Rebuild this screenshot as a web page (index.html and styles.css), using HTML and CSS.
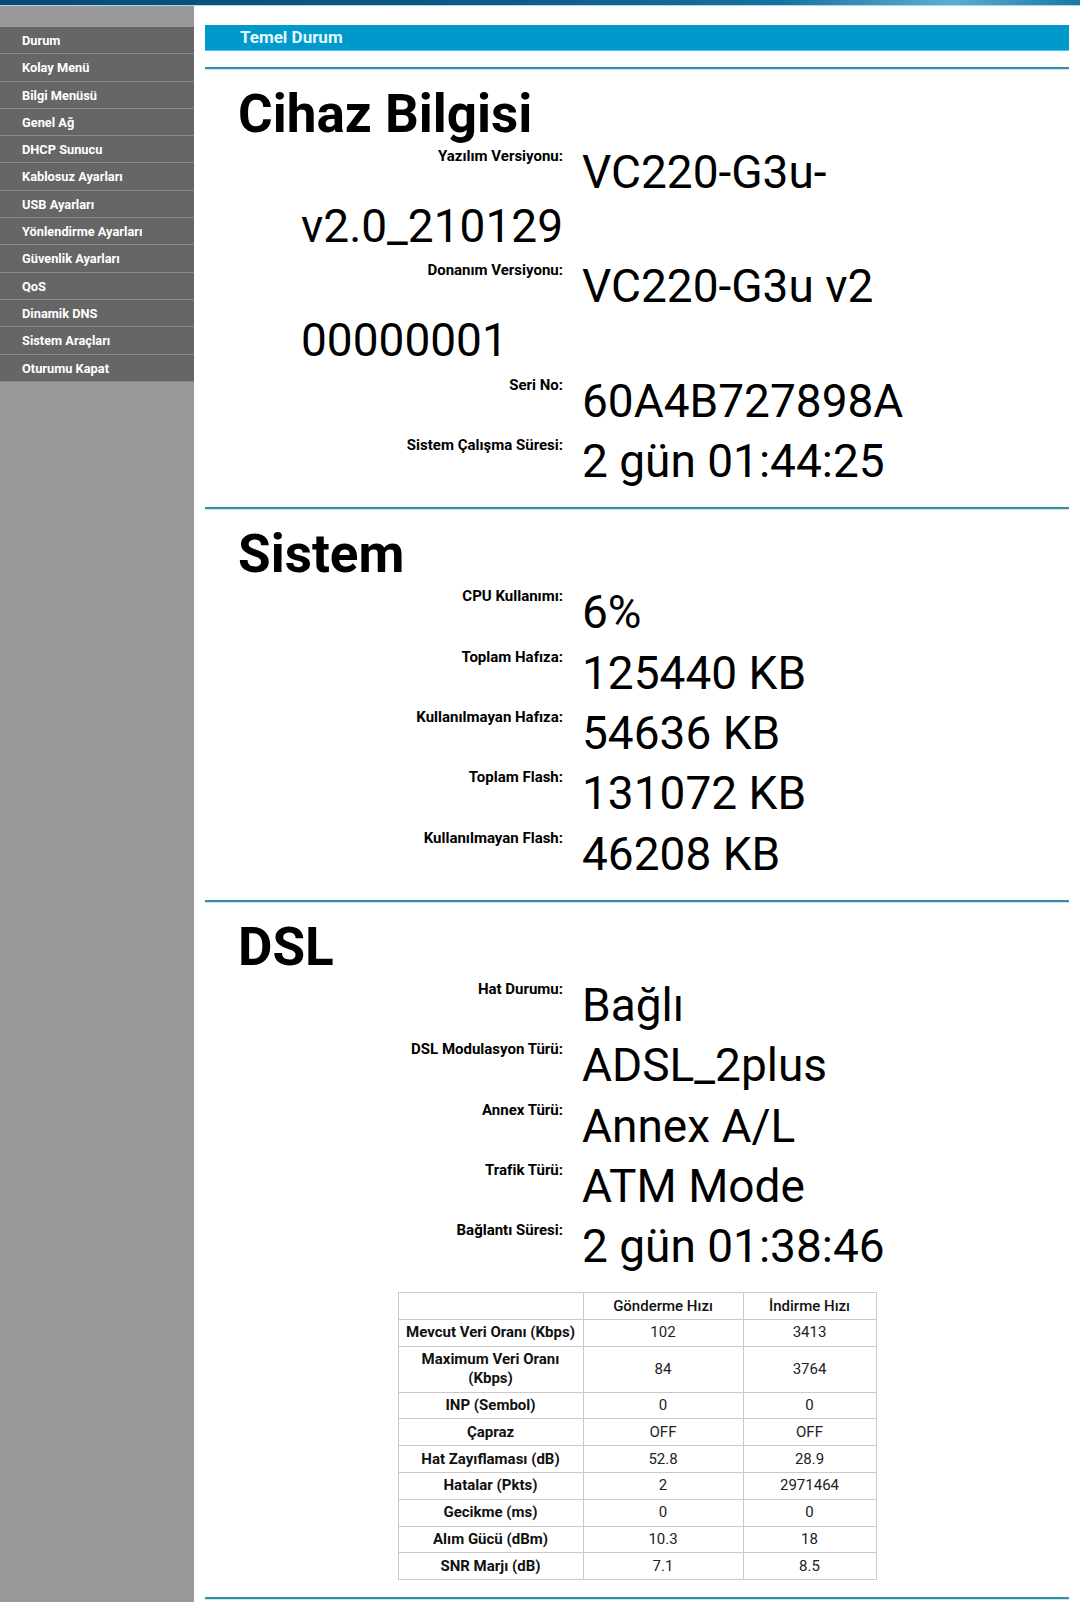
FILE: index.html
```html
<!DOCTYPE html>
<html lang="tr">
<head>
<meta charset="utf-8">
<title>Temel Durum</title>
<link rel="stylesheet" href="styles.css">
</head>
<body>
<div class="topbar"></div>
<div class="layout">
  <nav class="sidebar">
    <ul class="menu">
      <li>Durum</li>
      <li>Kolay Menü</li>
      <li>Bilgi Menüsü</li>
      <li>Genel Ağ</li>
      <li>DHCP Sunucu</li>
      <li>Kablosuz Ayarları</li>
      <li>USB Ayarları</li>
      <li>Yönlendirme Ayarları</li>
      <li>Güvenlik Ayarları</li>
      <li>QoS</li>
      <li>Dinamik DNS</li>
      <li>Sistem Araçları</li>
      <li>Oturumu Kapat</li>
    </ul>
  </nav>
  <main class="main">
    <div class="title-bar">Temel Durum</div>
    <hr class="rule first">

    <section class="block">
      <h2 class="block-title">Cihaz Bilgisi</h2>
      <div class="row"><span class="label">Yazılım Versiyonu:</span><span class="value">VC220-G3u-v2.0_210129</span></div>
      <div class="row"><span class="label">Donanım Versiyonu:</span><span class="value">VC220-G3u v2 00000001</span></div>
      <div class="row"><span class="label">Seri No:</span><span class="value">60A4B727898A</span></div>
      <div class="row"><span class="label">Sistem Çalışma Süresi:</span><span class="value">2 gün 01:44:25</span></div>
    </section>
    <hr class="rule">

    <section class="block">
      <h2 class="block-title">Sistem</h2>
      <div class="row"><span class="label">CPU Kullanımı:</span><span class="value">6%</span></div>
      <div class="row"><span class="label">Toplam Hafıza:</span><span class="value">125440 KB</span></div>
      <div class="row"><span class="label">Kullanılmayan Hafıza:</span><span class="value">54636 KB</span></div>
      <div class="row"><span class="label">Toplam Flash:</span><span class="value">131072 KB</span></div>
      <div class="row"><span class="label">Kullanılmayan Flash:</span><span class="value">46208 KB</span></div>
    </section>
    <hr class="rule">

    <section class="block">
      <h2 class="block-title">DSL</h2>
      <div class="row"><span class="label">Hat Durumu:</span><span class="value">Bağlı</span></div>
      <div class="row"><span class="label">DSL Modulasyon Türü:</span><span class="value">ADSL_2plus</span></div>
      <div class="row"><span class="label">Annex Türü:</span><span class="value">Annex A/L</span></div>
      <div class="row"><span class="label">Trafik Türü:</span><span class="value">ATM Mode</span></div>
      <div class="row"><span class="label">Bağlantı Süresi:</span><span class="value">2 gün 01:38:46</span></div>

      <table class="stats">
        <colgroup>
          <col class="c1"><col class="c2"><col class="c3">
        </colgroup>
        <thead>
          <tr><th></th><th>Gönderme Hızı</th><th>İndirme Hızı</th></tr>
        </thead>
        <tbody>
          <tr><th>Mevcut Veri Oranı (Kbps)</th><td>102</td><td>3413</td></tr>
          <tr><th>Maximum Veri Oranı (Kbps)</th><td>84</td><td>3764</td></tr>
          <tr><th>INP (Sembol)</th><td>0</td><td>0</td></tr>
          <tr><th>Çapraz</th><td>OFF</td><td>OFF</td></tr>
          <tr><th>Hat Zayıflaması (dB)</th><td>52.8</td><td>28.9</td></tr>
          <tr><th>Hatalar (Pkts)</th><td>2</td><td>2971464</td></tr>
          <tr><th>Gecikme (ms)</th><td>0</td><td>0</td></tr>
          <tr><th>Alım Gücü (dBm)</th><td>10.3</td><td>18</td></tr>
          <tr><th>SNR Marjı (dB)</th><td>7.1</td><td>8.5</td></tr>
        </tbody>
      </table>
    </section>
    <hr class="rule">
  </main>
</div>
</body>
</html>
```

FILE: styles.css
```css
* { box-sizing: border-box; }

html, body {
  margin: 0;
  padding: 0;
  background: #fff;
}

body {
  font-family: Roboto, "Noto Sans", "Liberation Sans", sans-serif;
  color: #000;
}

/* thin header strip */
.topbar {
  height: 6px;
  background: linear-gradient(to right, #0a4a72 0%, #0d5a86 45%, #17709e 72%, #5aaed0 88%, #1a76a4 100%);
  border-bottom: 1px solid #a9d9ee;
}

.layout {
  display: flex;
  align-items: stretch;
  min-height: 1596px;
}

/* left navigation */
.sidebar {
  width: 194px;
  flex: none;
  background: #999;
  padding-top: 21px;
}

.menu {
  list-style: none;
  margin: 0;
  padding: 0;
}

.menu li {
  height: 27.3px;
  line-height: 27px;
  padding-left: 22px;
  background: #666;
  border-bottom: 1.3px solid #8a8a8a;
  color: #fff;
  font-size: 12.8px;
  font-weight: 700;
  white-space: nowrap;
}

/* content column */
.main {
  flex: 1;
  padding: 19px 11px 0 11px;
}

.title-bar {
  height: 26px;
  line-height: 24px;
  padding-left: 35px;
  background: #0099cc;
  border-bottom: 1px solid #55c2e3;
  color: #e4f8ff;
  font-size: 17px;
  font-weight: 700;
}

.rule {
  margin: 19px 0 0 0;
  height: 2px;
  border: 0;
  background: #3a8da8;
  box-shadow: 0 1px 0 #bfe6f2;
}

.rule.first {
  margin-top: 16px;
}

.block-title {
  margin: 14px 0 0 33px;
  font-size: 53px;
  font-weight: 700;
  line-height: normal;
}

.row {
  margin: 0 0 6.4px 96px;
  font-size: 46px;
  line-height: normal;
}

.label {
  display: inline-block;
  vertical-align: top;
  width: 281px;
  padding-right: 19px;
  padding-top: 2px;
  text-align: right;
  font-size: 15px;
  font-weight: 700;
  line-height: normal;
}

/* DSL line statistics */
.stats {
  margin: 19px auto -2px auto;
  border-collapse: collapse;
  font-size: 15px;
  line-height: 19px;
  color: #111;
}

.stats .c1 { width: 185px; }
.stats .c2 { width: 160px; }
.stats .c3 { width: 133px; }

.stats th,
.stats td {
  border: 1px solid #c9c9c9;
  padding: 3.4px 4px;
  text-align: center;
}

.stats th { font-weight: 700; }
.stats td { font-weight: 400; color: #222; }
.stats thead th { font-weight: 500; }
```
